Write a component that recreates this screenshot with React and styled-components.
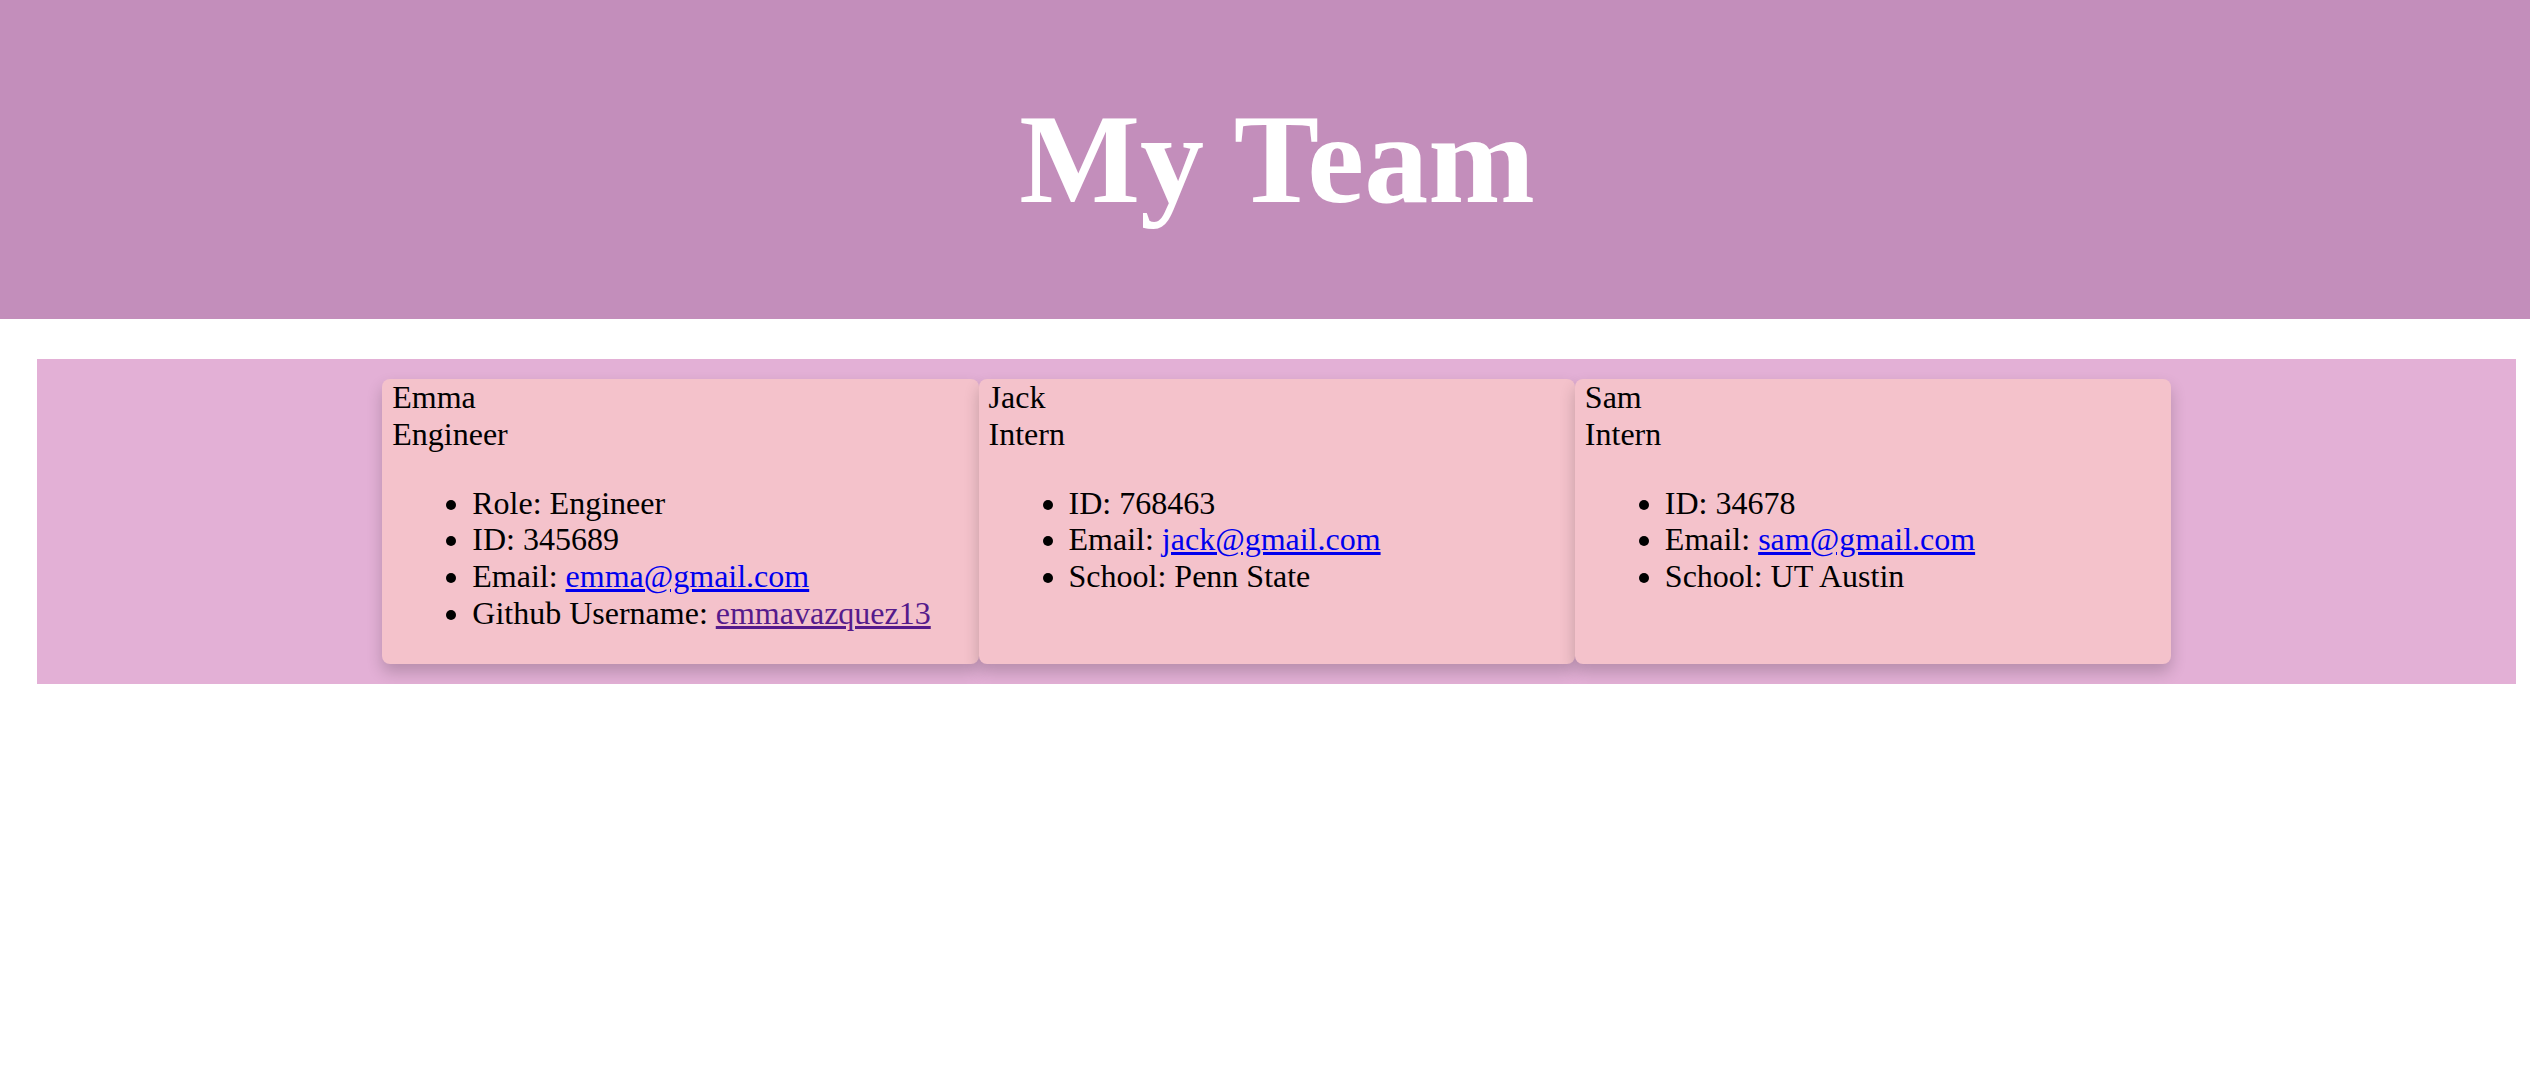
import React from "react";
import styled, { createGlobalStyle } from "styled-components";

const team = [
  {
    name: "Emma",
    title: "Engineer",
    items: [
      { label: "Role", value: "Engineer" },
      { label: "ID", value: "345689" },
      { label: "Email", value: "emma@gmail.com", href: "mailto:emma@gmail.com" },
      { label: "Github Username", value: "emmavazquez13", href: "#github", visited: true },
    ],
  },
  {
    name: "Jack",
    title: "Intern",
    items: [
      { label: "ID", value: "768463" },
      { label: "Email", value: "jack@gmail.com", href: "mailto:jack@gmail.com" },
      { label: "School", value: "Penn State" },
    ],
  },
  {
    name: "Sam",
    title: "Intern",
    items: [
      { label: "ID", value: "34678" },
      { label: "Email", value: "sam@gmail.com", href: "mailto:sam@gmail.com" },
      { label: "School", value: "UT Austin" },
    ],
  },
];

export default function App() {
  return (
    <>
      <GlobalStyle />
      <Header>
        <h1>My Team</h1>
      </Header>
      <Section>
        {team.map((member) => (
          <Card key={member.name}>
            <div>{member.name}</div>
            <div>{member.title}</div>
            <InfoList>
              {member.items.map((item) => (
                <li key={item.label}>
                  {item.label}:{" "}
                  {item.href ? (
                    <Link href={item.href} $visited={item.visited}>
                      {item.value}
                    </Link>
                  ) : (
                    item.value
                  )}
                </li>
              ))}
            </InfoList>
          </Card>
        ))}
      </Section>
    </>
  );
}

const GlobalStyle = createGlobalStyle`
  body {
    margin: 0;
    background: #ffffff;
    font-family: "Liberation Serif", "Times New Roman", serif;
    color: #000;
  }
`;

const Header = styled.header`
  height: 319px;
  background-color: #c38ebb;
  display: flex;
  align-items: center;
  justify-content: center;
  padding-left: 24px;
  box-sizing: border-box;
  h1 {
    margin: 0;
    color: #fff;
    font-size: 128px;
    font-weight: bold;
    line-height: 1.15;
  }
`;

const Section = styled.section`
  width: 98%;
  margin: 40px 0 0 37px;
  padding: 20px 0;
  box-sizing: border-box;
  background-color: #e3b0d6;
  display: flex;
  justify-content: center;
  align-items: stretch;
`;

const Card = styled.div`
  width: 24.05%;
  padding-left: 10px;
  box-sizing: border-box;
  background-color: #f4c2cb;
  border-radius: 8px;
  box-shadow: 0 8px 16px 0 rgba(0, 0, 0, 0.2);
  font-size: 32px;
  line-height: 1.15;
`;

const InfoList = styled.ul`
  margin: 32px 0;
  padding-left: 80px;
`;

const Link = styled.a`
  color: ${(p) => (p.$visited ? "#551a8b" : "#0000ee")};
  text-decoration: underline;
`;
